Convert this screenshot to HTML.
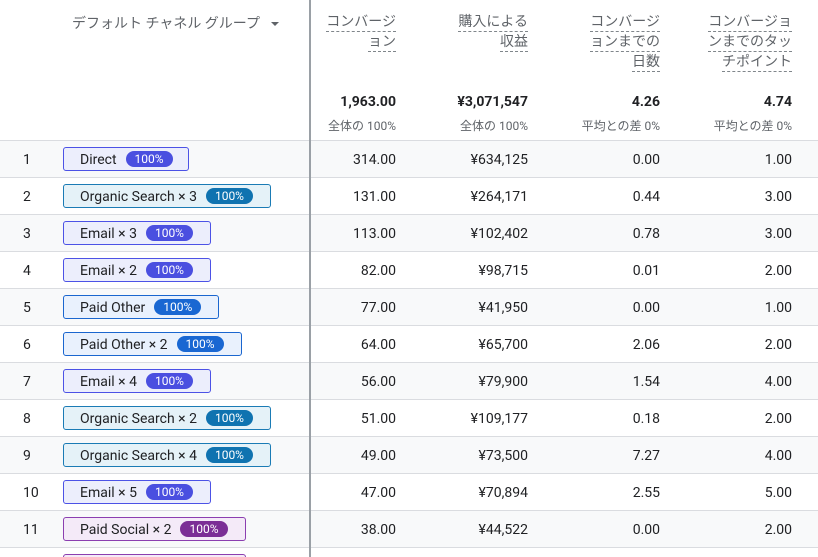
<!DOCTYPE html>
<html style="width:818px;height:557px;overflow:hidden"><head><meta charset="utf-8"><style>
*{margin:0;padding:0;box-sizing:border-box}
body{width:818px;height:557px;overflow:hidden;background:#fff;font-family:"Roboto","Liberation Sans","Noto Sans CJK JP",sans-serif;color:#202124;position:relative}
.abs{position:absolute}
.hd{color:#5f6368;font-size:14px;text-align:right;line-height:20px}
.hd span{border-bottom:1px dashed #80868b;display:inline-block;line-height:18px}
.row{position:absolute;left:0;width:818px;height:37px;border-top:1px solid #dadce0;overflow:hidden}
.odd{background:#f8f9fa}
.num{position:absolute;left:23px;top:1px;line-height:36px;font-size:14px}
.chip{position:absolute;left:63px;top:6px;height:24px;border:1px solid;border-radius:3px;font-size:14px;line-height:24px;padding-left:16px;white-space:nowrap}
.b{display:inline-block;color:#fff;font-size:12px;line-height:16px;height:16px;border-radius:8px;padding:0 9px;margin-left:9px;vertical-align:1px}
.v{position:absolute;top:1px;line-height:36px;font-size:14px;text-align:right}
.c1{right:422px}.c2{right:290px}.c3{right:158px}.c4{right:26px}
.em{background:#eceefc;border-color:#4c52e6}.em .b{background:#4a4fe0}
.og{background:#e5f2f8;border-color:#1a7bb5}.og .b{background:#0f73b0}
.po{background:#e9f1fd;border-color:#1a66cf}.po .b{background:#1967d2}
.ps{background:#f4eaf8;border-color:#8b3eb0}.ps .b{background:#7b2e96}
</style></head><body>
<div class="abs" style="left:72px;top:14px;font-size:14px;color:#5f6368;line-height:20px">デフォルト チャネル グループ</div>
<div class="abs" style="left:271px;top:22px;width:0;height:0;border-left:4px solid transparent;border-right:4px solid transparent;border-top:4px solid #5f6368"></div>
<div class="abs" style="left:309px;top:0;width:2px;height:557px;background:#9aa0a6;z-index:5"></div>

<div class="abs hd" style="right:422px;top:12px;width:80px"><span>コンバージ</span><br><span>ョン</span></div>
<div class="abs hd" style="right:290px;top:12px;width:90px"><span>購入による</span><br><span>収益</span></div>
<div class="abs hd" style="right:158px;top:12px;width:90px"><span>コンバージ</span><br><span>ョンまでの</span><br><span>日数</span></div>
<div class="abs hd" style="right:26px;top:12px;width:100px"><span>コンバージョ</span><br><span>ンまでのタッ</span><br><span>チポイント</span></div>

<div class="abs" style="right:422px;top:94px;font-size:14px;font-weight:bold;text-align:right">1,963.00</div>
<div class="abs" style="right:290px;top:94px;font-size:14px;font-weight:bold">¥3,071,547</div>
<div class="abs" style="right:158px;top:94px;font-size:14px;font-weight:bold">4.26</div>
<div class="abs" style="right:26px;top:94px;font-size:14px;font-weight:bold">4.74</div>
<div class="abs" style="right:422px;top:117px;font-size:12px;color:#5f6368">全体の 100%</div>
<div class="abs" style="right:290px;top:117px;font-size:12px;color:#5f6368">全体の 100%</div>
<div class="abs" style="right:158px;top:117px;font-size:12px;color:#5f6368">平均との差 0%</div>
<div class="abs" style="right:26px;top:117px;font-size:12px;color:#5f6368">平均との差 0%</div>

<div class="row odd" style="top:140px"><div class="num">1</div><div class="chip em" style="width:126px">Direct<span class="b">100%</span></div><div class="v c1">314.00</div><div class="v c2">¥634,125</div><div class="v c3">0.00</div><div class="v c4">1.00</div></div>
<div class="row" style="top:177px"><div class="num">2</div><div class="chip og" style="width:208px">Organic Search × 3<span class="b">100%</span></div><div class="v c1">131.00</div><div class="v c2">¥264,171</div><div class="v c3">0.44</div><div class="v c4">3.00</div></div>
<div class="row odd" style="top:214px"><div class="num">3</div><div class="chip em" style="width:148px">Email × 3<span class="b">100%</span></div><div class="v c1">113.00</div><div class="v c2">¥102,402</div><div class="v c3">0.78</div><div class="v c4">3.00</div></div>
<div class="row" style="top:251px"><div class="num">4</div><div class="chip em" style="width:148px">Email × 2<span class="b">100%</span></div><div class="v c1">82.00</div><div class="v c2">¥98,715</div><div class="v c3">0.01</div><div class="v c4">2.00</div></div>
<div class="row odd" style="top:288px"><div class="num">5</div><div class="chip po" style="width:156px">Paid Other<span class="b">100%</span></div><div class="v c1">77.00</div><div class="v c2">¥41,950</div><div class="v c3">0.00</div><div class="v c4">1.00</div></div>
<div class="row" style="top:325px"><div class="num">6</div><div class="chip po" style="width:179px">Paid Other × 2<span class="b">100%</span></div><div class="v c1">64.00</div><div class="v c2">¥65,700</div><div class="v c3">2.06</div><div class="v c4">2.00</div></div>
<div class="row odd" style="top:362px"><div class="num">7</div><div class="chip em" style="width:148px">Email × 4<span class="b">100%</span></div><div class="v c1">56.00</div><div class="v c2">¥79,900</div><div class="v c3">1.54</div><div class="v c4">4.00</div></div>
<div class="row" style="top:399px"><div class="num">8</div><div class="chip og" style="width:208px">Organic Search × 2<span class="b">100%</span></div><div class="v c1">51.00</div><div class="v c2">¥109,177</div><div class="v c3">0.18</div><div class="v c4">2.00</div></div>
<div class="row odd" style="top:436px"><div class="num">9</div><div class="chip og" style="width:208px">Organic Search × 4<span class="b">100%</span></div><div class="v c1">49.00</div><div class="v c2">¥73,500</div><div class="v c3">7.27</div><div class="v c4">4.00</div></div>
<div class="row" style="top:473px"><div class="num">10</div><div class="chip em" style="width:148px">Email × 5<span class="b">100%</span></div><div class="v c1">47.00</div><div class="v c2">¥70,894</div><div class="v c3">2.55</div><div class="v c4">5.00</div></div>
<div class="row odd" style="top:510px"><div class="num">11</div><div class="chip ps" style="width:183px">Paid Social × 2<span class="b">100%</span></div><div class="v c1">38.00</div><div class="v c2">¥44,522</div><div class="v c3">0.00</div><div class="v c4">2.00</div></div>
<div class="row" style="top:547px;height:10px"><div class="chip ps" style="width:183px"></div></div>
</body></html>
